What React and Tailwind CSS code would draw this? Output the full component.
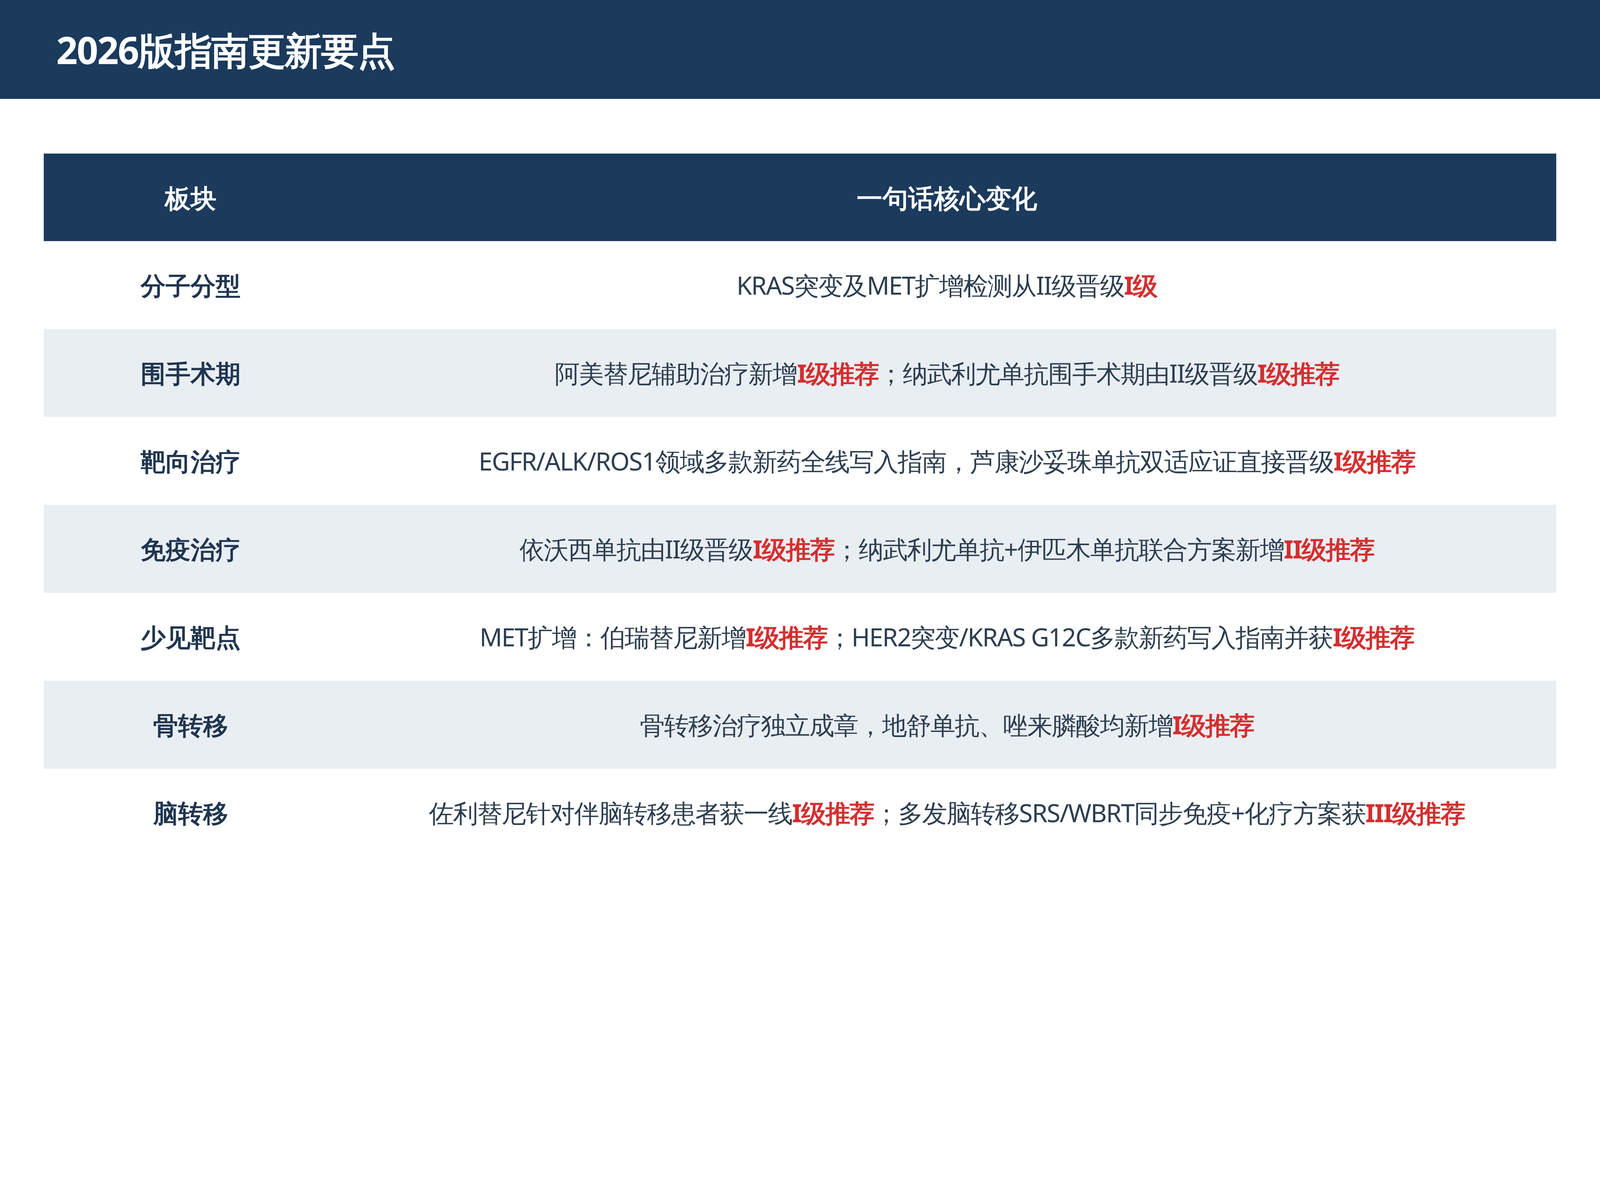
const rows = [
  ['分子分型', [['KRAS突变及MET扩增检测从II级晋级', 0], ['I级', 1]]],
  ['围手术期', [['阿美替尼辅助治疗新增', 0], ['I级推荐', 1], ['；纳武利尤单抗围手术期由II级晋级', 0], ['I级推荐', 1]]],
  ['靶向治疗', [['EGFR/ALK/ROS1领域多款新药全线写入指南，芦康沙妥珠单抗双适应证直接晋级', 0], ['I级推荐', 1]]],
  ['免疫治疗', [['依沃西单抗由II级晋级', 0], ['I级推荐', 1], ['；纳武利尤单抗+伊匹木单抗联合方案新增', 0], ['II级推荐', 1]]],
  ['少见靶点', [['MET扩增：伯瑞替尼新增', 0], ['I级推荐', 1], ['；HER2突变/KRAS G12C多款新药写入指南并获', 0], ['I级推荐', 1]]],
  ['骨转移', [['骨转移治疗独立成章，地舒单抗、唑来膦酸均新增', 0], ['I级推荐', 1]]],
  ['脑转移', [['佐利替尼针对伴脑转移患者获一线', 0], ['I级推荐', 1], ['；多发脑转移SRS/WBRT同步免疫+化疗方案获', 0], ['III级推荐', 1]]],
]

export default function App() {
  return (
    <div className="w-full min-h-screen overflow-hidden bg-white font-['Noto_Sans','Noto_Sans_CJK_SC',sans-serif]">
      <div className="h-[253px] bg-[#1b3a5c] flex items-center px-[144px]">
        <h1 className="text-[96px] font-bold text-white tracking-tight">2026版指南更新要点</h1>
      </div>
      <div className="mx-[112px] mt-[140px]">
        <div className="h-[224px] bg-[#1b3a5c] flex items-center text-white font-bold text-[66px]">
          <div className="w-[752px] shrink-0 text-center">板块</div>
          <div className="flex-1 min-w-0 text-center">一句话核心变化</div>
        </div>
        {rows.map(([k, parts], i) => (
          <div key={i} className={`h-[225px] flex items-center text-[64px] ${i % 2 ? 'bg-[#e9eef3]' : 'bg-white'}`}>
            <div className="w-[752px] shrink-0 text-center font-bold text-[#1f3550]">{k}</div>
            <div className="flex-1 min-w-0 text-center text-[#2c3e50] tracking-[-2px]">
              {parts.map(([t, red], j) => (
                <span key={j} className={red ? 'text-[#d32f2f] font-bold' : ''}>{t}</span>
              ))}
            </div>
          </div>
        ))}
      </div>
    </div>
  )
}
